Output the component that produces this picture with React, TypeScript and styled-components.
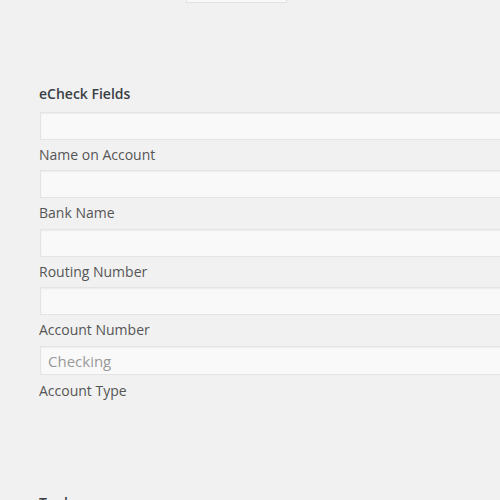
import styled, { createGlobalStyle } from 'styled-components';

const GlobalStyle = createGlobalStyle`
  html, body {
    margin: 0;
    padding: 0;
    background: #f1f1f1;
    overflow: hidden;
  }
  body {
    font-family: "Open Sans", "Liberation Sans", sans-serif;
    color: #444;
  }
`;

const Page = styled.div`
  width: 500px;
  height: 500px;
  overflow: hidden;
`;

const TopButton = styled.div`
  margin-left: 186px;
  width: 99px;
  height: 2px;
  background: #f9f9f9;
  border: 1px solid #e2e2e2;
  border-top: none;
`;

const Section = styled.section`
  padding-left: 39px;
  width: 520px;
`;

const Heading = styled.h3<{ $top: number }>`
  margin: ${(p) => p.$top}px 0 0;
  font-size: 14px;
  font-weight: 600;
  line-height: 18px;
  color: #3a3f44;
`;

const Field = styled.div`
  display: flex;
  flex-direction: column;
`;

const Input = styled.input`
  box-sizing: border-box;
  width: 100%;
  height: 28px;
  margin: 0 0 0 1px;
  padding: 3px 8px;
  background: #f9f9f9;
  border: 1px solid #e4e4e4;
  box-shadow: inset 0 1px 2px rgba(0, 0, 0, 0.06);
  font: inherit;
  font-size: 14px;
  outline: none;
`;

const Select = styled.div`
  box-sizing: border-box;
  width: 100%;
  height: 29px;
  margin: 1px 0 0 1px;
  padding: 0 7px;
  display: flex;
  align-items: center;
  background: #f9f9f9;
  border: 1px solid #e4e4e4;
  box-shadow: inset 0 1px 2px rgba(0, 0, 0, 0.06);
  font-size: 15px;
  color: #999;
`;

const Label = styled.label<{ $gap?: number }>`
  display: block;
  margin: ${(p) => p.$gap ?? 5}px 0 5px;
  font-size: 14px;
  line-height: 20.33px;
  color: #555;
`;

const fields = ['Name on Account', 'Bank Name', 'Routing Number', 'Account Number'];

export default function App() {
  return (
    <Page>
      <GlobalStyle />
      <TopButton />
      <Section>
        <Heading $top={82}>eCheck Fields</Heading>
        <div style={{ height: 9 }} />
        {fields.map((f) => (
          <Field key={f}>
            <Input type="text" />
            <Label>{f}</Label>
          </Field>
        ))}
        <Field>
          <Select>Checking</Select>
          <Label $gap={6}>Account Type</Label>
        </Field>
        <Heading $top={87}>Tools</Heading>
      </Section>
    </Page>
  );
}
